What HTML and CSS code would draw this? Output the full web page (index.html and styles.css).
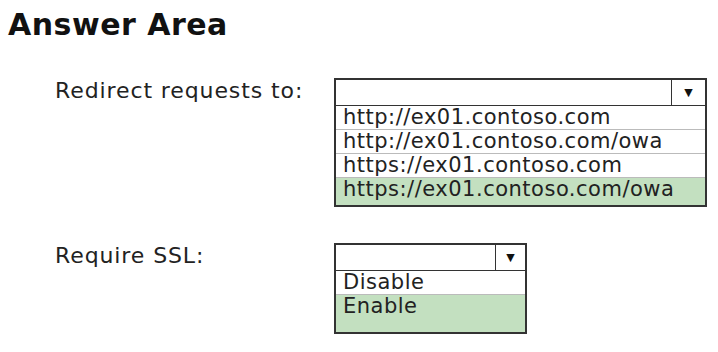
FILE: index.html
```html
<!DOCTYPE html>
<html lang="en">
<head>
    <meta charset="UTF-8">
    <title>Answer Area</title>
    <link rel="stylesheet" href="styles.css">
</head>
<body>
    <h1 class="title">Answer Area</h1>

    <div class="field field-redirect">
        <div class="label">Redirect requests to:</div>
        <div class="dropdown wide">
            <div class="select">
                <span class="value"></span>
                <span class="arrow">&#9660;</span>
            </div>
            <ul class="options">
                <li>http://ex01.contoso.com</li>
                <li>http://ex01.contoso.com/owa</li>
                <li>https://ex01.contoso.com</li>
                <li class="chosen">https://ex01.contoso.com/owa</li>
            </ul>
        </div>
    </div>

    <div class="field field-ssl">
        <div class="label">Require SSL:</div>
        <div class="dropdown narrow">
            <div class="select">
                <span class="value"></span>
                <span class="arrow">&#9660;</span>
            </div>
            <ul class="options">
                <li>Disable</li>
                <li class="chosen tall">Enable</li>
            </ul>
        </div>
    </div>
</body>
</html>
```

FILE: styles.css
```css
body {
    margin: 0;
    padding: 0;
    background: #fff;
    color: #222;
    font-family: "DejaVu Sans", Verdana, sans-serif;
}
.title {
    margin: 0;
    padding: 7px 0 0 8px;
    font-size: 30px;
    font-weight: bold;
    letter-spacing: 0.5px;
    color: #111;
    line-height: 36px;
}
.field {
    display: flex;
    align-items: flex-start;
    padding-left: 55px;
}
.field-redirect {
    margin-top: 35px;
}
.field-ssl {
    margin-top: 36px;
}
.label {
    width: 279px;
    font-size: 22px;
    line-height: 26px;
    letter-spacing: 0.9px;
}
.dropdown {
    border: 2px solid #333;
    background: #fff;
}
.wide {
    width: 369px;
}
.narrow {
    width: 189px;
}
.select {
    display: flex;
    height: 25px;
    border-bottom: 1px solid #333;
}
.value {
    flex: 1;
}
.arrow {
    width: 33px;
    border-left: 1px solid #333;
    font-size: 11px;
    line-height: 25px;
    text-align: center;
    color: #111;
}
.narrow .arrow {
    width: 29px;
}
.options {
    list-style: none;
    margin: 0;
    padding: 0;
}
.options li {
    font-size: 21px;
    line-height: 23px;
    letter-spacing: 0.5px;
    padding-left: 7px;
    border-bottom: 1px solid #bbb;
    color: #222;
}
.options li:last-child {
    border-bottom: none;
}
.options .chosen {
    background: #c3e0c0;
    height: 27px;
}
.options .tall {
    height: 37px;
}
```
